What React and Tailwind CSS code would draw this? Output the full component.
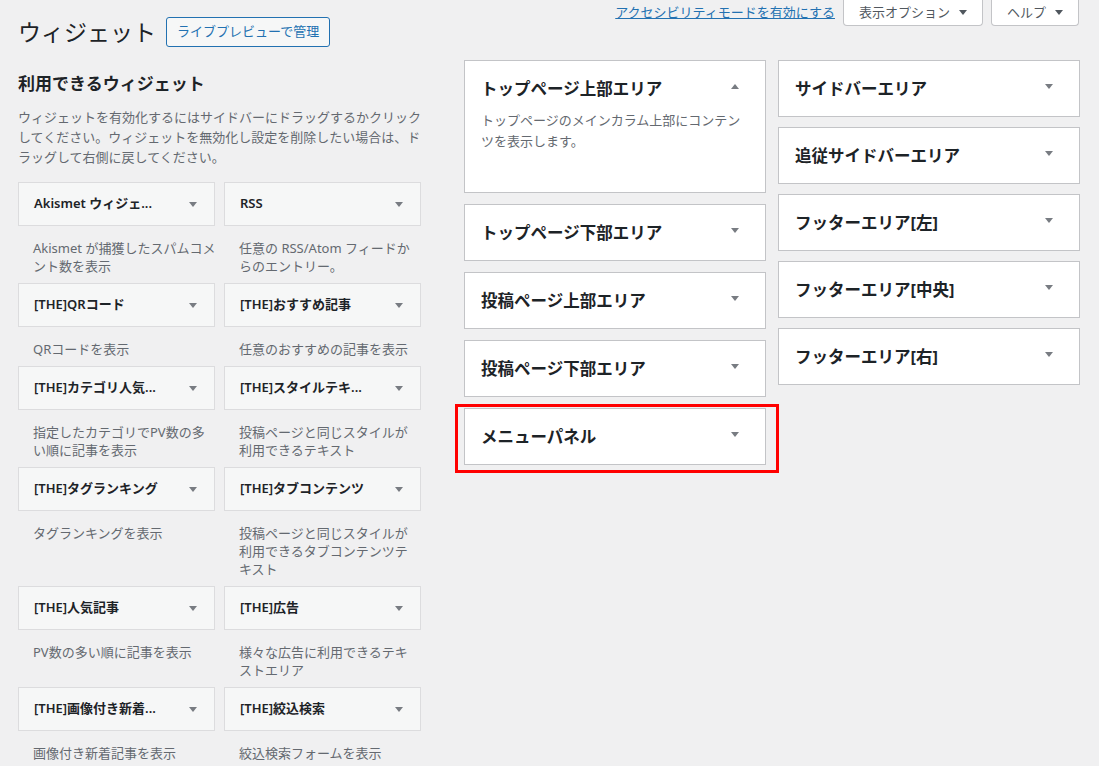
const widgets = [
  { title: 'Akismet ウィジェ...', desc: ['Akismet が捕獲したスパムコメ', 'ント数を表示'] },
  { title: 'RSS', desc: ['任意の RSS/Atom フィードか', 'らのエントリー。'] },
  { title: '[THE]QRコード', desc: ['QRコードを表示'] },
  { title: '[THE]おすすめ記事', desc: ['任意のおすすめの記事を表示'] },
  { title: '[THE]カテゴリ人気...', desc: ['指定したカテゴリでPV数の多', 'い順に記事を表示'] },
  { title: '[THE]スタイルテキ...', desc: ['投稿ページと同じスタイルが', '利用できるテキスト'] },
  { title: '[THE]タグランキング', desc: ['タグランキングを表示'] },
  { title: '[THE]タブコンテンツ', desc: ['投稿ページと同じスタイルが', '利用できるタブコンテンツテ', 'キスト'] },
  { title: '[THE]人気記事', desc: ['PV数の多い順に記事を表示'] },
  { title: '[THE]広告', desc: ['様々な広告に利用できるテキ', 'ストエリア'] },
  { title: '[THE]画像付き新着...', desc: ['画像付き新着記事を表示'] },
  { title: '[THE]絞込検索', desc: ['絞込検索フォームを表示'] },
];

const middleAreas = ['トップページ下部エリア', '投稿ページ上部エリア', '投稿ページ下部エリア'];
const rightAreas = ['サイドバーエリア', '追従サイドバーエリア', 'フッターエリア[左]', 'フッターエリア[中央]', 'フッターエリア[右]'];

const Caret = ({ up = false, color = '#787c82', className = '' }) => (
  <svg width="8" height="5" viewBox="0 0 8 5" className={className}>
    <polygon points={up ? '0,5 8,5 4,0' : '0,0 8,0 4,5'} fill={color} />
  </svg>
);

const AreaBox = ({ title }) => (
  <div className="bg-white border border-[#c3c4c7] h-[57px] flex items-center justify-between pl-[16px] pr-[26px]">
    <h3 className="text-[16.5px] font-bold leading-[24px] text-[#1d2327]">{title}</h3>
    <Caret className="mb-[4px]" />
  </div>
);

const WidgetTile = ({ widget }) => (
  <div>
    <div className="h-[44px] bg-[#f6f7f7] border border-[#dcdcde] flex items-center justify-between pl-[15px] pr-[17px]">
      <span className="text-[13px] font-semibold text-[#1d2327] whitespace-nowrap">{widget.title}</span>
      <Caret />
    </div>
    <div className="pt-[13px] pb-[8px] pl-[15px] text-[13px] leading-[18px] text-[#646970]">
      {widget.desc.map((line) => (
        <div key={line} className="whitespace-nowrap">{line}</div>
      ))}
    </div>
  </div>
);

export default function App() {
  return (
    <div className="min-h-screen bg-[#f0f0f1] font-['Noto_Sans','Noto_Sans_CJK_JP',sans-serif] text-[#1d2327]">
      {/* title row + screen meta links */}
      <div className="flex justify-between items-start pl-[18px] pr-[20px]">
        <div className="flex items-center pt-[17px]">
          <h1 className="text-[23px] leading-[30px] font-normal text-[#1d2327]">ウィジェット</h1>
          <button className="ml-[10px] h-[30px] px-[10px] border border-[#2271b1] rounded-[3px] bg-[#f6f7f7] text-[13px] text-[#2271b1]">
            ライブプレビューで管理
          </button>
        </div>
        <div className="flex items-start gap-2">
          <a className="mt-[2px] text-[13px] leading-[20px] text-[#2271b1] underline">アクセシビリティモードを有効にする</a>
          <button className="h-[26px] px-[15px] flex items-center gap-[9px] bg-white border border-t-0 border-[#c3c4c7] rounded-b-[4px] text-[13px] text-[#50575e]">
            表示オプション
            <Caret color="#50575e" />
          </button>
          <button className="h-[26px] px-[15px] flex items-center gap-[9px] bg-white border border-t-0 border-[#c3c4c7] rounded-b-[4px] text-[13px] text-[#50575e]">
            ヘルプ
            <Caret color="#50575e" />
          </button>
        </div>
      </div>

      <div className="flex items-start pl-[18px] pr-[19px] mt-[13px]">
        {/* available widgets */}
        <div className="w-[403px] shrink-0">
          <h2 className="pt-[12px] text-[17px] leading-[24px] font-bold text-[#1d2327]">利用できるウィジェット</h2>
          <p className="mt-[11px] text-[13px] leading-[20px] text-[#646970]">
            ウィジェットを有効化するにはサイドバーにドラッグするかクリック
            <br />
            してください。ウィジェットを無効化し設定を削除したい場合は、ド
            <br />
            ラッグして右側に戻してください。
          </p>
          <div className="mt-[15px] grid grid-cols-2 gap-x-[9px]">
            {widgets.map((w) => (
              <WidgetTile key={w.title} widget={w} />
            ))}
          </div>
        </div>

        {/* middle sidebars */}
        <div className="w-[302px] shrink-0 ml-[43px] flex flex-col gap-[11px]">
          <div className="bg-white border border-[#c3c4c7]">
            <div className="h-[55px] flex items-center justify-between pl-[16px] pr-[26px]">
              <h3 className="text-[16.5px] font-bold leading-[24px] text-[#1d2327]">トップページ上部エリア</h3>
              <Caret up className="mb-[4px]" />
            </div>
            <p className="-mt-[6px] pl-[16px] pb-[40px] text-[13px] leading-[21px] text-[#646970]">
              トップページのメインカラム上部にコンテン
              <br />
              ツを表示します。
            </p>
          </div>
          {middleAreas.map((a) => (
            <AreaBox key={a} title={a} />
          ))}
          <div className="relative">
            <AreaBox title="メニューパネル" />
            <span className="absolute -left-[9px] -top-[4px] -right-[13px] -bottom-[8px] border-[3px] border-[#ff0000] pointer-events-none" />
          </div>
        </div>

        {/* right sidebars */}
        <div className="w-[302px] shrink-0 ml-[12px] flex flex-col gap-[10px]">
          {rightAreas.map((a) => (
            <AreaBox key={a} title={a} />
          ))}
        </div>
      </div>
    </div>
  );
}
